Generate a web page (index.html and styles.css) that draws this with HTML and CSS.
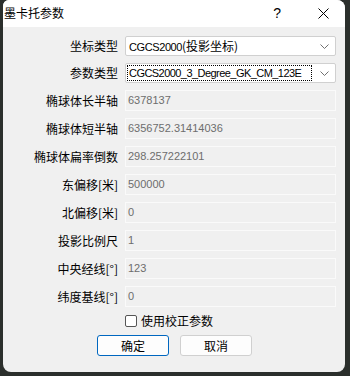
FILE: index.html
```html
<!DOCTYPE html>
<html>
<head>
<meta charset="utf-8">
<link rel="stylesheet" href="styles.css">
</head>
<body>
<div class="window">
  <div class="titlebar">
    <span class="title">墨卡托参数</span>
    <span class="help">?</span>
    <span class="close">
      <svg width="11" height="11" viewBox="0 0 11 11"><path d="M0.5 0.5 L10.5 10.5 M10.5 0.5 L0.5 10.5" stroke="#000" stroke-width="1" fill="none"/></svg>
    </span>
  </div>
  <div class="content">
    <div class="form">
      <label class="lbl">坐标类型</label>
      <div class="combo"><span class="ctext">CGCS2000<span class="cjk">(投影坐标)</span></span><svg class="chev" width="9" height="5" viewBox="0 0 9 5"><path d="M0.5 0.5 L4.5 4.5 L8.5 0.5" stroke="#707070" fill="none"/></svg></div>

      <label class="lbl">参数类型</label>
      <div class="combo"><span class="ctext focus">CGCS2000_3_Degree_GK_CM_123E</span><svg class="chev" width="9" height="5" viewBox="0 0 9 5"><path d="M0.5 0.5 L4.5 4.5 L8.5 0.5" stroke="#707070" fill="none"/></svg></div>

      <label class="lbl">椭球体长半轴</label>
      <div class="ro">6378137</div>

      <label class="lbl">椭球体短半轴</label>
      <div class="ro">6356752.31414036</div>

      <label class="lbl">椭球体扁率倒数</label>
      <div class="ro">298.257222101</div>

      <label class="lbl">东偏移[米]</label>
      <div class="ro">500000</div>

      <label class="lbl">北偏移[米]</label>
      <div class="ro">0</div>

      <label class="lbl">投影比例尺</label>
      <div class="ro">1</div>

      <label class="lbl">中央经线[°]</label>
      <div class="ro">123</div>

      <label class="lbl">纬度基线[°]</label>
      <div class="ro">0</div>

      <span></span>
      <div class="check"><span class="box"></span><span class="ctxt">使用校正参数</span></div>
    </div>
    <div class="buttons">
      <button class="btn primary">确定</button>
      <button class="btn">取消</button>
    </div>
  </div>
</div>
</body>
</html>
```
FILE: styles.css
```css
html, body {
  margin: 0;
  padding: 0;
}
body {
  width: 350px;
  height: 376px;
  background: #2b2f2c;
  font-family: "Noto Sans CJK SC", "Liberation Sans", sans-serif;
  overflow: hidden;
}
.window {
  margin-left: 3px;
  width: 342px;
  height: 372px;
  background: #f0f0f0;
  border-radius: 6px 8px 8px 8px;
  overflow: hidden;
  display: flex;
  flex-direction: column;
}
.titlebar {
  height: 27px;
  background: #ffffff;
  display: flex;
  align-items: center;
  flex-shrink: 0;
}
.title {
  font-size: 12px;
  color: #000;
  margin-left: 1px;
  line-height: 14px;
  margin-top: -1px;
}
.help {
  margin-left: auto;
  font-family: "Liberation Sans", sans-serif;
  font-size: 14px;
  color: #000;
  margin-top: -1px;
}
.close {
  display: flex;
  margin-left: 37px;
  margin-right: 16px;
  margin-top: -1px;
}
.content {
  padding-top: 9px;
  display: flex;
  flex-direction: column;
}
.form {
  display: grid;
  grid-template-columns: 115px 211px;
  column-gap: 7px;
  row-gap: 7px;
  align-items: center;
}
.lbl {
  text-align: right;
  font-size: 12px;
  color: #000;
  line-height: 14px;
  white-space: nowrap;
}
.combo {
  height: 20px;
  box-sizing: border-box;
  background: #fff;
  border: 1px solid #d0d0d0;
  border-radius: 2px;
  display: flex;
  align-items: center;
  padding-left: 1px;
  font-family: "Liberation Sans", "Noto Sans CJK SC", sans-serif;
  font-size: 11px;
  color: #000;
}
.cjk {
  font-family: "Noto Sans CJK SC", sans-serif;
  font-size: 12px;
  letter-spacing: 0;
}
.ctext {
  flex: 1;
  min-width: 0;
  overflow: hidden;
  height: 16px;
  line-height: 16px;
  box-sizing: border-box;
  padding-left: 2px;
  white-space: nowrap;
  letter-spacing: -0.4px;
}
.ctext.focus {
  border: 1px dotted #000;
  line-height: 14px;
  padding-left: 1px;
  letter-spacing: -0.55px;
}
.chev {
  flex-shrink: 0;
  margin-right: 6px;
  margin-left: 8px;
}
.ro {
  height: 21px;
  box-sizing: border-box;
  border: 1px solid #fafafa;
  background: #f0f0f0;
  font-family: "Liberation Sans", sans-serif;
  font-size: 11px;
  color: #6d6d6d;
  padding-left: 2px;
  padding-top: 2px;
  line-height: 14px;
}
.check {
  display: flex;
  align-items: center;
  height: 12px;
  margin-top: 1px;
}
.box {
  width: 12px;
  height: 12px;
  box-sizing: border-box;
  border: 1px solid #555;
  border-radius: 2px;
  background: #fff;
}
.ctxt {
  font-size: 12px;
  margin-left: 4px;
  line-height: 14px;
  color: #000;
}
.buttons {
  display: flex;
  justify-content: center;
  gap: 11px;
  margin-top: 8px;
  padding-left: 1px;
}
.btn {
  width: 72px;
  height: 21px;
  box-sizing: border-box;
  background: #fdfdfd;
  border: 1px solid #d0d0d0;
  border-radius: 3px;
  font-family: "Noto Sans CJK SC", sans-serif;
  font-size: 12px;
  color: #000;
  padding: 0;
  line-height: 14px;
}
.btn.primary {
  border-color: #0067c0;
}
```
